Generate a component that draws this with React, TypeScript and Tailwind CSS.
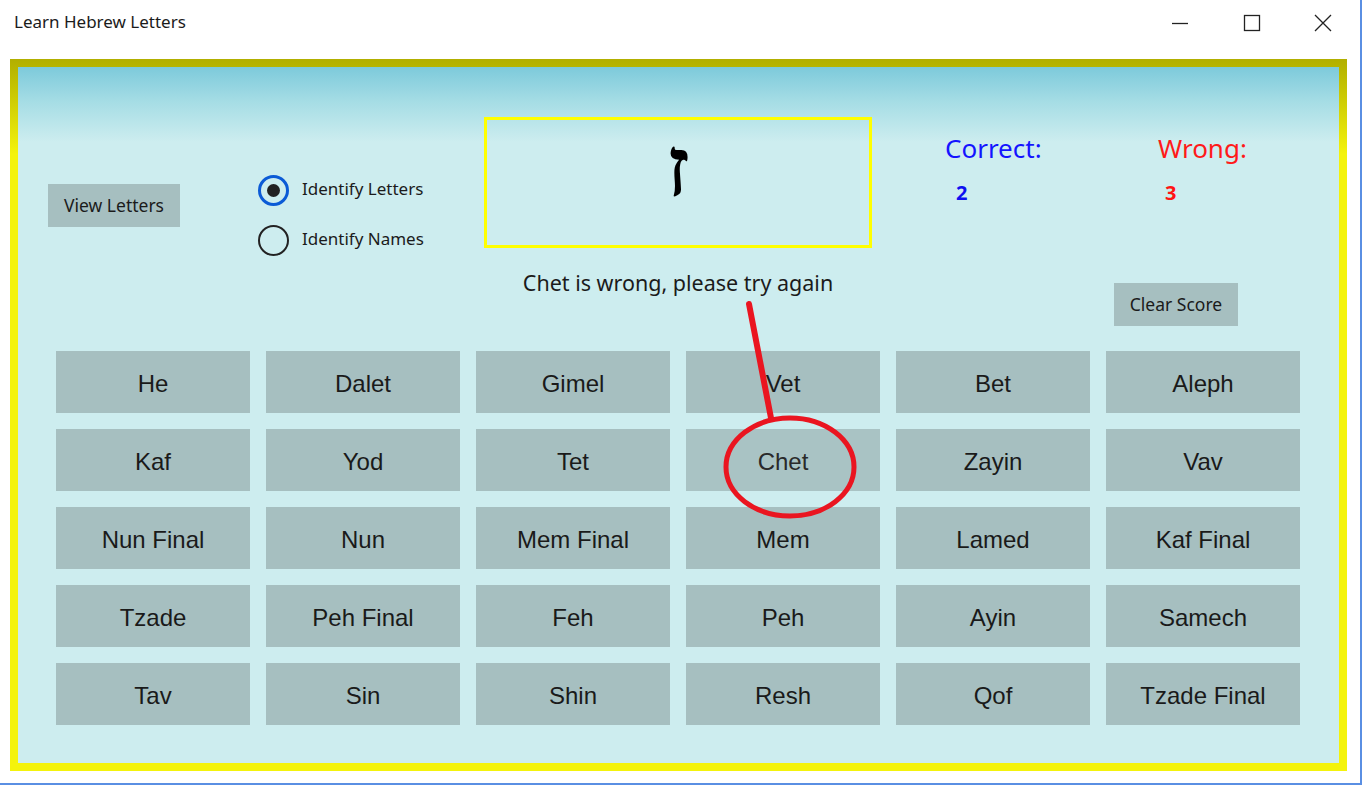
import React from 'react';

// Letter names laid out in the order shown on screen (rows of six)
const LETTER_ROWS: string[][] = [
  ['He', 'Dalet', 'Gimel', 'Vet', 'Bet', 'Aleph'],
  ['Kaf', 'Yod', 'Tet', 'Chet', 'Zayin', 'Vav'],
  ['Nun Final', 'Nun', 'Mem Final', 'Mem', 'Lamed', 'Kaf Final'],
  ['Tzade', 'Peh Final', 'Feh', 'Peh', 'Ayin', 'Samech'],
  ['Tav', 'Sin', 'Shin', 'Resh', 'Qof', 'Tzade Final'],
];

const uiFont = { fontFamily: '"Noto Sans", "Open Sans", sans-serif' };

function TitleBar() {
  return (
    <div className="flex h-[59px] items-start justify-between">
      <div className="pl-[14px] pt-[9px] text-[17px] text-[#1b1b1b]" style={uiFont}>
        Learn Hebrew Letters
      </div>
      <div className="flex pt-[13px] pr-[28px]">
        <svg width="18" height="18" viewBox="0 0 18 18" className="mr-[54px] mt-[1px]">
          <line x1="1" y1="9.5" x2="17" y2="9.5" stroke="#222" strokeWidth="1.3" />
        </svg>
        <svg width="18" height="18" viewBox="0 0 18 18" className="mr-[53px] mt-[1px]">
          <rect x="1.5" y="1.5" width="15" height="15" fill="none" stroke="#222" strokeWidth="1.3" />
        </svg>
        <svg width="18" height="18" viewBox="0 0 18 18" className="mt-[1px]">
          <path d="M1 1 L17 17 M17 1 L1 17" stroke="#222" strokeWidth="1.3" />
        </svg>
      </div>
    </div>
  );
}

function Radio({ checked, label }: { checked: boolean; label: string }) {
  return (
    <div className="flex items-center">
      <div
        className={
          checked
            ? 'flex h-[31px] w-[31px] items-center justify-center rounded-full border-[3px] border-[#0b5bd6]'
            : 'flex h-[31px] w-[31px] items-center justify-center rounded-full border-[2.5px] border-[#222]'
        }
      >
        {checked && <div className="h-[13px] w-[13px] rounded-full bg-[#222]" />}
      </div>
      <span className="ml-[13px] -mt-[3px] text-[17px] text-[#1b1b1b]" style={uiFont}>
        {label}
      </span>
    </div>
  );
}

function LetterButton({ name }: { name: string }) {
  const hovered = name === 'Chet';
  return (
    <button
      className={
        hovered
          ? 'h-[62px] w-[194px] bg-[#a9c3c4] pt-[3px] text-[24px] text-[#2a2a2a]'
          : 'h-[62px] w-[194px] bg-[#a6bfc0] pt-[3px] text-[24px] text-[#1a1a1a]'
      }
      style={{ fontFamily: '"Liberation Sans", Arial, sans-serif' }}
    >
      {name}
    </button>
  );
}

export default function App() {
  return (
    <div className="relative h-[787px] w-[1367px] overflow-hidden bg-white">
      <div className="h-[785px] w-[1362px] border-b-2 border-r-2 border-[#5a8fe3]">
        <TitleBar />

        {/* yellow frame with olive top */}
        <div className="ml-[10px] h-[712px] w-[1337px] bg-[linear-gradient(to_bottom,#b2af00_0px,#b8b600_10px,#f4f30c_95px)] p-[8px]">
          <div className="h-[696px] w-[1321px] bg-[linear-gradient(to_bottom,#7dcadb_0px,#a6dde5_35px,#cdedef_75px)]">
            {/* top area */}
            <div className="flex h-[284px]">
              <div className="w-[240px] pl-[30px] pt-[117px]">
                <button className="h-[43px] w-[132px] bg-[#a6bfc0] text-[17.5px] text-[#1b1b1b]" style={uiFont}>
                  View Letters
                </button>
              </div>

              <div className="flex w-[226px] flex-col gap-[19px] pt-[108px]">
                <Radio checked label="Identify Letters" />
                <Radio checked={false} label="Identify Names" />
              </div>

              <div className="flex w-[388px] flex-col items-center pt-[50px]">
                <div className="flex h-[131px] w-[388px] justify-center border-[3px] border-[#ffff00]">
                  <span
                    className="mt-[6px] text-[84px] font-bold leading-none text-black"
                    style={{ fontFamily: '"Liberation Serif", "DejaVu Sans", serif' }}
                  >
                    ז
                  </span>
                </div>
                <div className="mt-[19px] text-[21.5px] text-[#1b1b1b]" style={uiFont}>
                  Chet is wrong, please try again
                </div>
              </div>

              <div className="flex flex-col pl-[73px] pt-[65px]">
                <div className="flex">
                  <div className="flex w-[213px] flex-col">
                    <span className="text-[26px] leading-[32px] text-[#1414ff]" style={uiFont}>
                      Correct:
                    </span>
                    <span className="mt-[17px] pl-[11px] text-[20px] font-bold leading-[24px] text-[#1010f0]" style={uiFont}>
                      2
                    </span>
                  </div>
                  <div className="flex flex-col">
                    <span className="text-[26px] leading-[32px] text-[#ff1a1a]" style={uiFont}>
                      Wrong:
                    </span>
                    <span className="mt-[17px] pl-[7px] text-[20px] font-bold leading-[24px] text-[#ff1414]" style={uiFont}>
                      3
                    </span>
                  </div>
                </div>
                <button
                  className="ml-[169px] mt-[78px] h-[43px] w-[124px] bg-[#a6bfc0] text-[17.5px] text-[#1b1b1b]"
                  style={uiFont}
                >
                  Clear Score
                </button>
              </div>
            </div>

            {/* letter buttons */}
            <div className="flex flex-col gap-[16px] pl-[38px]">
              {LETTER_ROWS.map((row, i) => (
                <div key={i} className="flex gap-[16px]">
                  {row.map((name) => (
                    <LetterButton key={name} name={name} />
                  ))}
                </div>
              ))}
            </div>
          </div>
        </div>
      </div>

      {/* red hand-drawn annotation */}
      <svg className="pointer-events-none absolute left-0 top-0" width="1367" height="787">
        <path d="M749 304 L771 418" stroke="#ea1520" strokeWidth="6" strokeLinecap="round" fill="none" />
        <ellipse cx="790" cy="467" rx="64" ry="49" stroke="#ea1520" strokeWidth="5" fill="none" />
      </svg>
    </div>
  );
}
